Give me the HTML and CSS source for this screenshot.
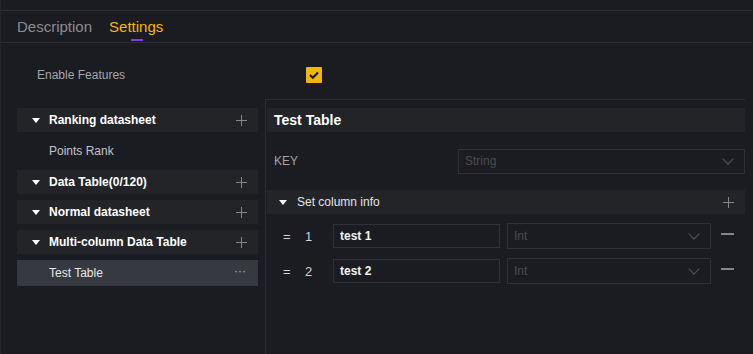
FILE: index.html
```html
<!DOCTYPE html>
<html lang="en">
<head>
    <meta charset="UTF-8">
    <title>Table Settings</title>
    <link rel="stylesheet" href="styles.css">
</head>
<body>
    <div class="panel">
        <div class="topbar"></div>

        <!-- Tabs -->
        <div class="tabs">
            <a href="#" class="tab">Description</a>
            <a href="#" class="tab active">Settings</a>
        </div>

        <div class="feature-row">
            <span class="feature-label">Enable Features</span>
            <span class="checkbox">
                <svg width="12" height="12" viewBox="0 0 12 12"><path d="M2 6 L4.8 8.8 L10 3.4" fill="none" stroke="#1b1c21" stroke-width="2.2"/></svg>
            </span>
        </div>

        <div class="workspace">
            <!-- Table list -->
            <div class="table-list">
                <div class="group-row">
                    <span class="caret"></span>
                    <span class="group-title">Ranking datasheet</span>
                    <span class="plus"></span>
                </div>
                <div class="item-row">Points Rank</div>
                <div class="group-row">
                    <span class="caret"></span>
                    <span class="group-title">Data Table(0/120)</span>
                    <span class="plus"></span>
                </div>
                <div class="group-row">
                    <span class="caret"></span>
                    <span class="group-title">Normal datasheet</span>
                    <span class="plus"></span>
                </div>
                <div class="group-row">
                    <span class="caret"></span>
                    <span class="group-title">Multi-column Data Table</span>
                    <span class="plus"></span>
                </div>
                <div class="item-row selected">
                    <span>Test Table</span>
                    <span class="more">&middot;&middot;&middot;</span>
                </div>
            </div>

            <!-- Table detail -->
            <div class="table-detail">
                <div class="detail-title">Test Table</div>

                <div class="key-row">
                    <span class="key-label">KEY</span>
                    <div class="select key-select">
                        <span>String</span>
                        <span class="chevron"></span>
                    </div>
                </div>

                <div class="section-row">
                    <span class="caret"></span>
                    <span class="section-title">Set column info</span>
                    <span class="plus"></span>
                </div>

                <div class="column-row">
                    <span class="drag">=</span>
                    <span class="index">1</span>
                    <div class="text-input">test 1</div>
                    <div class="select type-select">
                        <span>Int</span>
                        <span class="chevron"></span>
                    </div>
                    <span class="minus"></span>
                </div>
                <div class="column-row">
                    <span class="drag">=</span>
                    <span class="index">2</span>
                    <div class="text-input">test 2</div>
                    <div class="select type-select">
                        <span>Int</span>
                        <span class="chevron"></span>
                    </div>
                    <span class="minus"></span>
                </div>
            </div>
        </div>
    </div>
</body>
</html>
```

FILE: styles.css
```css
:root {
    --bg: #1b1c21;
    --row-bg: #232428;
    --selected-bg: #363940;
    --line: #2c2d32;
    --field-border: #303136;
    --accent: #f5b50a;
    --muted: #a4a5a9;
    --placeholder: #4c4d52;
}

* {
    margin: 0;
    padding: 0;
    box-sizing: border-box;
}

body {
    font-family: 'Liberation Sans', Arial, sans-serif;
    background-color: var(--bg);
    color: #fff;
    font-size: 12px;
}

.panel {
    width: 753px;
    height: 354px;
    overflow: hidden;
    border-left: 1px solid #25262b;
}

.topbar {
    height: 11px;
    border-bottom: 1px solid #2e2f34;
}

.tabs {
    display: flex;
    gap: 17px;
    height: 32px;
    padding-left: 16px;
    border-bottom: 1px solid var(--line);
}

.tab {
    position: relative;
    font-size: 15px;
    line-height: 31px;
    color: #8b8c91;
    text-decoration: none;
}

.tab.active {
    color: var(--accent);
}

.tab.active::after {
    content: "";
    position: absolute;
    left: 22px;
    bottom: 1px;
    width: 12px;
    height: 2px;
    background-color: #7b3fe4;
}

.feature-row {
    display: flex;
    align-items: center;
    height: 56px;
    padding-left: 36px;
    padding-top: 8px;
}

.feature-label {
    width: 269px;
    color: var(--muted);
}

.checkbox {
    display: flex;
    align-items: center;
    justify-content: center;
    width: 16px;
    height: 16px;
    background-color: var(--accent);
    border-radius: 1px;
}

.workspace {
    display: flex;
    height: 256px;
}

.table-list {
    width: 264px;
    padding: 9px 7px 0 16px;
}

.group-row,
.section-row {
    display: flex;
    align-items: center;
    height: 24px;
    margin-bottom: 6px;
    background-color: var(--row-bg);
    padding: 0 11px 0 15px;
}

.caret {
    width: 0;
    height: 0;
    border-left: 4px solid transparent;
    border-right: 4px solid transparent;
    border-top: 5px solid #fff;
    margin-right: 9px;
}

.group-title {
    flex-grow: 1;
    font-weight: bold;
}

.plus {
    position: relative;
    width: 11px;
    height: 11px;
}

.plus::before,
.plus::after {
    content: "";
    position: absolute;
    background-color: #85868b;
}

.plus::before {
    left: 0;
    top: 5px;
    width: 11px;
    height: 1px;
}

.plus::after {
    left: 5px;
    top: 0;
    width: 1px;
    height: 11px;
}

.item-row {
    display: flex;
    align-items: center;
    justify-content: space-between;
    height: 26px;
    margin-bottom: 6px;
    padding: 0 12px 0 32px;
    color: #c3c4c8;
}

.item-row.selected {
    background-color: var(--selected-bg);
    color: #e6e7ea;
}

.more {
    color: #a9aaaf;
    letter-spacing: 0;
    font-size: 12px;
    line-height: 12px;
    margin-top: -4px;
}

.table-detail {
    flex-grow: 1;
    margin-right: 8px;
    border-top: 1px solid var(--line);
    border-left: 1px solid var(--line);
    padding: 8px 0 0 1px;
}

.detail-title {
    height: 24px;
    line-height: 24px;
    background-color: var(--row-bg);
    padding-left: 7px;
    font-size: 14px;
    font-weight: bold;
}

.key-row {
    display: flex;
    align-items: center;
    height: 58px;
    padding-left: 7px;
}

.key-label {
    width: 184px;
    color: var(--muted);
}

.select {
    display: flex;
    align-items: center;
    justify-content: space-between;
    height: 25px;
    border: 1px solid var(--field-border);
    padding: 0 12px 0 6px;
    color: var(--placeholder);
}

.key-select {
    flex-grow: 1;
}

.chevron {
    width: 8px;
    height: 8px;
    border-right: 1px solid #54555a;
    border-bottom: 1px solid #54555a;
    transform: rotate(45deg);
    margin-top: -5px;
}

.section-row {
    padding-left: 12px;
    margin-bottom: 9px;
}

.section-row .caret {
    margin-right: 10px;
}

.section-title {
    flex-grow: 1;
    color: #e2e3e6;
}

.column-row {
    display: flex;
    align-items: center;
    height: 26px;
    margin-bottom: 9px;
    padding-left: 16px;
}

.drag {
    width: 22px;
    color: #d2d3d6;
    font-size: 13px;
}

.index {
    width: 28px;
    color: #d2d3d6;
    font-size: 13px;
}

.text-input {
    width: 167px;
    height: 24px;
    line-height: 22px;
    border: 1px solid var(--field-border);
    padding-left: 6px;
    font-weight: bold;
    color: #f2f2f2;
}

.type-select {
    width: 204px;
    height: 26px;
    margin-left: 7px;
}

.minus {
    width: 13px;
    height: 2px;
    margin-left: 10px;
    margin-top: -4px;
    background-color: #85868b;
}
```
